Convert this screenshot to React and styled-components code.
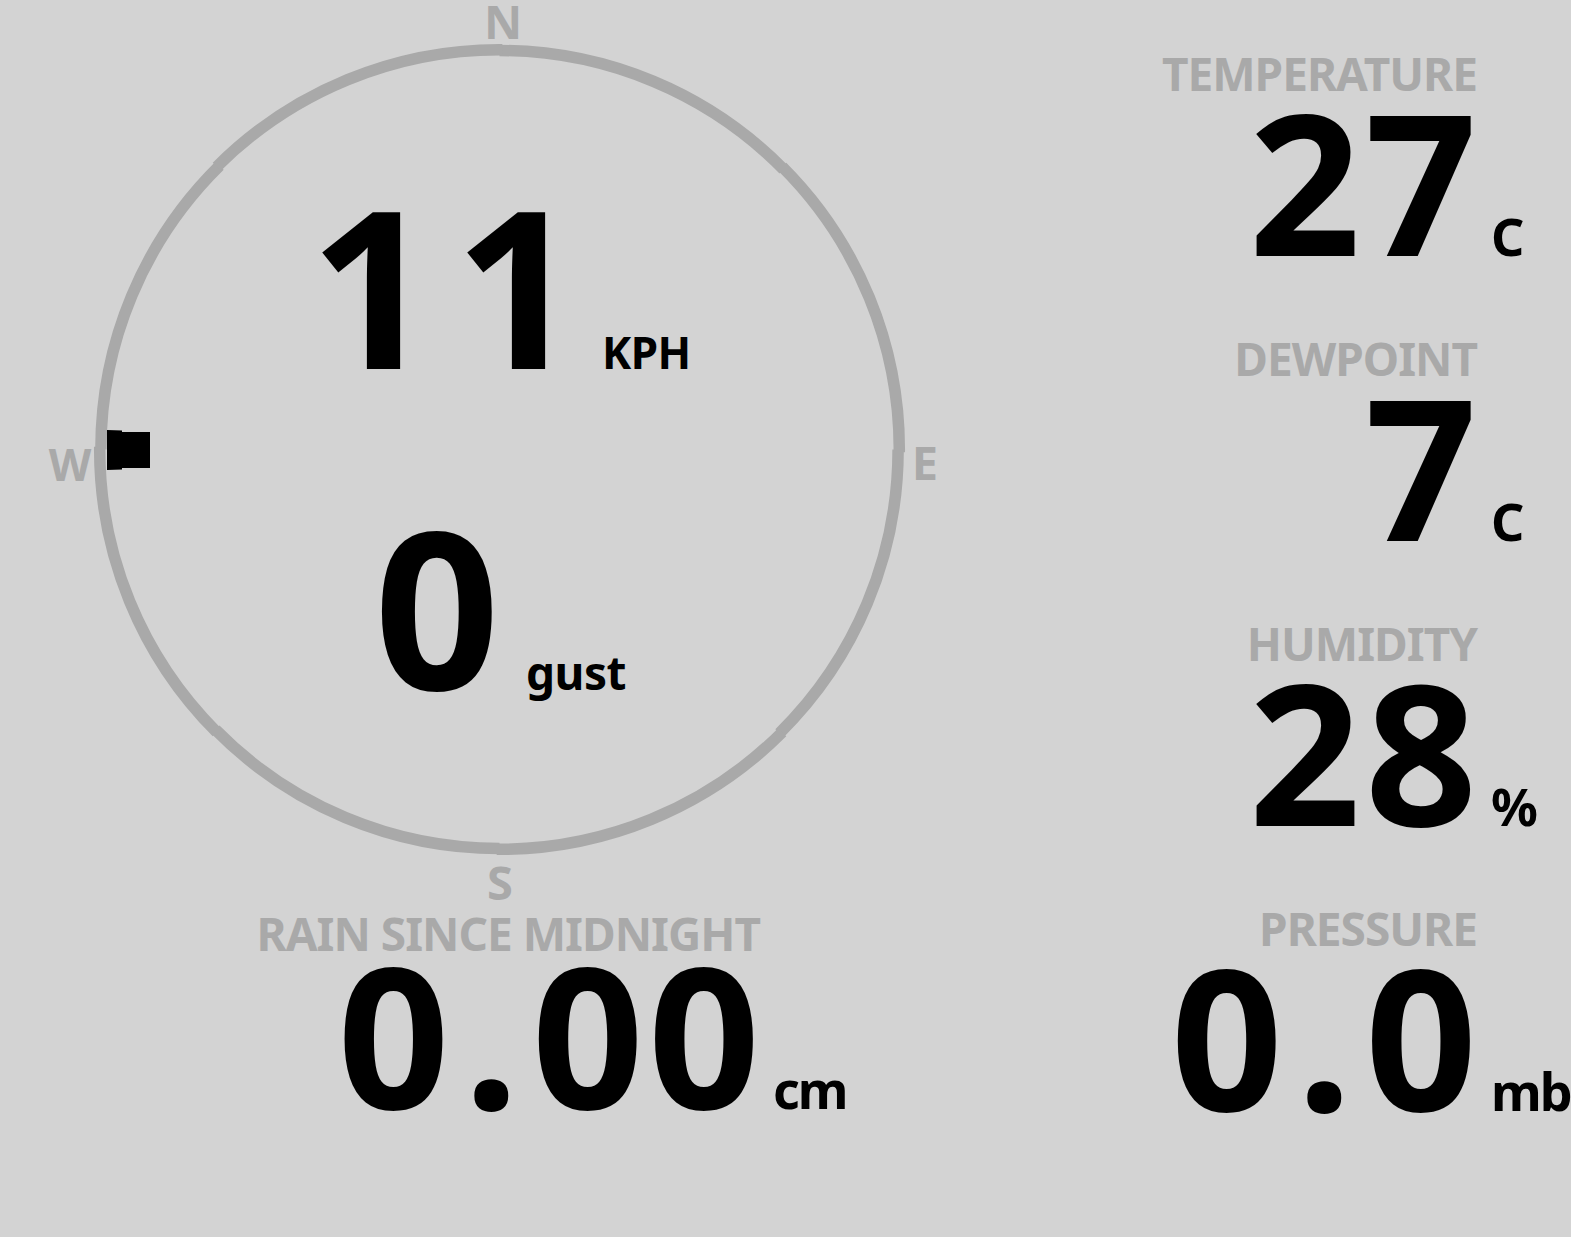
import React from "react";
import styled, { createGlobalStyle } from "styled-components";

const GlobalStyle = createGlobalStyle`
  html, body {
    margin: 0;
    padding: 0;
    background: #d3d3d3;
  }
  body {
    font-family: "Noto Sans", "DejaVu Sans", sans-serif;
    font-weight: 700;
    color: #000;
    overflow: hidden;
  }
`;

const Screen = styled.main`
  display: flex;
  width: 1571px;
  height: 1237px;
  background: #d3d3d3;
`;

const LeftCol = styled.section`
  width: 1000px;
  flex: none;
  display: flex;
  flex-direction: column;
`;

const RightCol = styled.section`
  flex: 1;
  display: flex;
  flex-direction: column;
`;

const Compass = styled.div`
  position: relative;
  height: 910px;
  box-sizing: border-box;
  padding-top: 194px;
  display: flex;
  flex-direction: column;
  align-items: center;
`;

const Dial = styled.svg`
  position: absolute;
  inset: 0;
  width: 100%;
  height: 100%;
  overflow: visible;
`;

const DirLabel = styled.text`
  font-family: "Noto Sans", "DejaVu Sans", sans-serif;
  font-weight: 700;
  font-size: ${(p) => p.$size || 47}px;
  fill: #a9a9a9;
`;

const Reading = styled.div`
  position: relative;
  display: flex;
  align-items: baseline;
  gap: ${(p) => p.$gap}px;
  margin-top: ${(p) => p.$top || 0}px;
`;

const SpeedValue = styled.span`
  font-size: 220px;
  line-height: 180px;
  letter-spacing: ${(p) => p.$spacing || 0}px;
`;

const SmallUnit = styled.span`
  font-size: ${(p) => p.$size}px;
  line-height: 1;
  letter-spacing: -0.5px;
`;

const StatGrid = styled.div`
  display: grid;
  grid-template-columns: auto 80px;
  column-gap: ${(p) => p.$gap}px;
  justify-content: end;
  align-items: baseline;
  padding: ${(p) => p.$pad};
`;

const Label = styled.div`
  grid-column: 1;
  justify-self: end;
  color: #a9a9a9;
  font-size: 46px;
  line-height: 46px;
  letter-spacing: -1px;
  white-space: nowrap;
  margin-top: ${(p) => p.$top || 0}px;
`;

const Value = styled.div`
  grid-column: 1;
  justify-self: end;
  font-size: 196px;
  line-height: 150px;
  letter-spacing: 4px;
  margin-right: -4px;
  margin-top: ${(p) => p.$top || 0}px;
  white-space: nowrap;
`;

const Dot = styled.span`
  margin: 0 9px 0 10px;
`;

const Unit = styled.div`
  grid-column: 2;
  font-size: 52px;
  line-height: 1;
  letter-spacing: -2px;
  margin-bottom: -12px;
  white-space: nowrap;
`;

const CX = 499.5;
const CY = 449.5;
const R = 399;

function arc(a1, a2, r) {
  const rad = (d) => (d * Math.PI) / 180;
  const x1 = CX + r * Math.sin(rad(a1));
  const y1 = CY - r * Math.cos(rad(a1));
  const x2 = CX + r * Math.sin(rad(a2));
  const y2 = CY - r * Math.cos(rad(a2));
  return `M ${x1.toFixed(2)} ${y1.toFixed(2)} A ${r} ${r} 0 0 1 ${x2.toFixed(2)} ${y2.toFixed(2)}`;
}

const offsets = [0, 0.8, -0.4, 0.8, 0, 0.8, -0.4, 0.8];

function CompassDial() {
  return (
    <Dial viewBox="0 0 1000 910" aria-hidden="true">
      {offsets.map((o, i) => (
        <path
          key={i}
          d={arc(i * 45, (i + 1) * 45 + 0.4, R + o)}
          fill="none"
          stroke="#a9a9a9"
          strokeWidth="11.5"
        />
      ))}
      <polygon
        points="107,430 122,430.5 122,432 150,432 150,468 122,468 122,469.5 107,470"
        fill="#000"
      />
      <DirLabel x="503" y="39" textAnchor="middle">N</DirLabel>
      <DirLabel x="925" y="480" textAnchor="middle">E</DirLabel>
      <DirLabel x="500" y="900" textAnchor="middle">S</DirLabel>
      <DirLabel x="70" y="481" textAnchor="middle" $size={44}>W</DirLabel>
    </Dial>
  );
}

function Number({ text }) {
  const parts = text.split(".");
  return parts.map((p, i) => (
    <React.Fragment key={i}>
      {i > 0 && <Dot>.</Dot>}
      {p}
    </React.Fragment>
  ));
}

const stats = [
  { label: "TEMPERATURE", value: "27", unit: "C" },
  { label: "DEWPOINT", value: "7", unit: "C" },
  { label: "HUMIDITY", value: "28", unit: "%" },
  { label: "PRESSURE", value: "0.0", unit: "mb" },
];

export default function App() {
  return (
    <>
      <GlobalStyle />
      <Screen>
        <LeftCol>
          <Compass>
            <CompassDial />
            <Reading $gap={3}>
              <SpeedValue $spacing={19}>11</SpeedValue>
              <SmallUnit $size={44}>KPH</SmallUnit>
            </Reading>
            <Reading $gap={26} $top={141}>
              <SpeedValue>0</SpeedValue>
              <SmallUnit $size={46}>gust</SmallUnit>
            </Reading>
          </Compass>
          <StatGrid $gap={13} $pad="0 147px 0 0">
            <Label>RAIN SINCE MIDNIGHT</Label>
            <Value $top={2}>
              <Number text="0.00" />
            </Value>
            <Unit>cm</Unit>
          </StatGrid>
        </LeftCol>
        <RightCol>
          <StatGrid $gap={14} $pad="50px 0 0 0">
            {stats.map((s, i) => (
              <React.Fragment key={s.label}>
                <Label $top={i === 0 ? 0 : 80}>{s.label}</Label>
                <Value $top={9}>
                  <Number text={s.value} />
                </Value>
                <Unit>{s.unit}</Unit>
              </React.Fragment>
            ))}
          </StatGrid>
        </RightCol>
      </Screen>
    </>
  );
}
